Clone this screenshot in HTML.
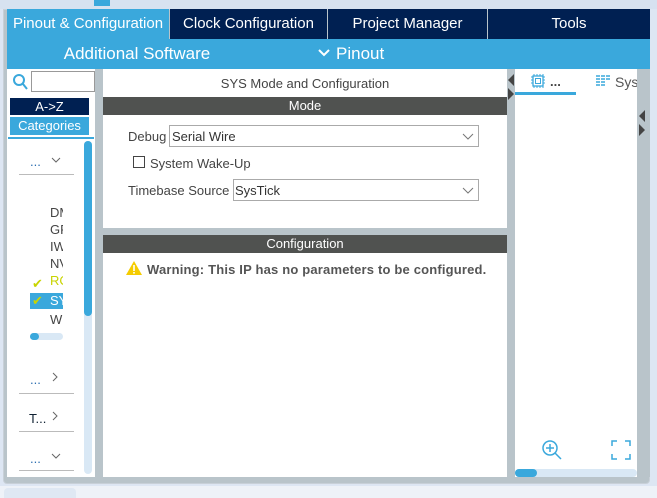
<!DOCTYPE html><html><head><style>
body{margin:0;width:657px;height:498px;overflow:hidden;background:#dde6f3;font-family:"Liberation Sans",sans-serif;position:relative}
div{position:absolute;box-sizing:border-box}
.t{color:#fff;font-size:15px;text-align:center;line-height:30px;top:9px;height:30px}
.g{color:#444;font-size:13px}
</style></head><body>
<div style="left:0;top:0;width:657px;height:9px;background:#d7e2f0"></div>
<div style="left:94px;top:0;width:16px;height:6px;background:#3aa8dc"></div>
<div style="left:3px;top:9px;width:647px;height:475px;background:#b9c4ca;border:1px solid #c8d0d8;border-radius:0 0 4px 4px"></div>
<div class="t" style="left:7px;width:162px;background:#3aa8dc">Pinout &amp; Configuration</div>
<div class="t" style="left:170px;width:157px;background:#002052">Clock Configuration</div>
<div class="t" style="left:328px;width:159px;background:#002052">Project Manager</div>
<div class="t" style="left:488px;width:162px;background:#002052">Tools</div>
<div style="left:7px;top:39px;width:643px;height:30px;background:#3aa8dc"></div>
<div class="t" style="left:7px;top:39px;width:260px;font-size:17px;color:#fff">Additional Software</div>
<svg style="position:absolute;left:318px;top:48px" width="12" height="10"><path d="M1 2L6 7L11 2" fill="none" stroke="#fff" stroke-width="2"/></svg>
<div class="t" style="left:336px;top:39px;width:50px;font-size:17px;color:#fff;text-align:left">Pinout</div>
<!-- left panel -->
<div style="left:7px;top:69px;width:88px;height:408px;background:#fff"></div>
<div style="left:95px;top:69px;width:8px;height:408px;background:#b9c4ca"></div>
<svg style="position:absolute;left:12px;top:73px" width="16" height="18"><circle cx="7" cy="7" r="5" fill="none" stroke="#3aa8dc" stroke-width="2"/><line x1="11" y1="11" x2="15" y2="16" stroke="#3aa8dc" stroke-width="2"/></svg>
<div style="left:31px;top:71px;width:64px;height:21px;border:1px solid #999;background:#fff"></div>
<div style="left:10px;top:98px;width:79px;height:17px;background:#002052;color:#fff;font-size:13px;text-align:center;line-height:17px">A-&gt;Z</div>
<div style="left:10px;top:117px;width:79px;height:18px;background:#3aa8dc;color:#fff;font-size:13px;text-align:center;line-height:18px">Categories</div>
<div style="left:8px;top:137px;width:86px;height:2px;background:#3aa8dc"></div>
<div style="left:84px;top:141px;width:8px;height:333px;background:#d9e8f5;border-radius:4px"></div>
<div style="left:84px;top:141px;width:8px;height:175px;background:#3aa8dc;border-radius:4px"></div>
<div class="g" style="left:30px;top:154px;color:#2a6db0">...</div>
<svg style="position:absolute;left:51px;top:157px" width="10" height="6"><path d="M1 1L5 5L9 1" fill="none" stroke="#666"/></svg>
<div style="left:19px;top:174px;width:55px;height:1px;background:#bbb"></div>
<div class="g" style="left:50px;top:204px;line-height:17px;width:13px;overflow:hidden;white-space:nowrap">DM<br>GP<br>IW<br>NV<br><span style="color:#c8d400">RC</span></div>
<div style="left:30px;top:293px;width:33px;height:16px;background:#3aa8dc"></div>
<div style="left:50px;top:293px;width:13px;height:16px;color:#fff;font-size:13px;line-height:16px;overflow:hidden;white-space:nowrap">SY</div>
<div class="g" style="left:32px;top:276px;color:#c8d400">&#10004;</div>
<div class="g" style="left:32px;top:293px;color:#c8d400">&#10004;</div>
<div class="g" style="left:50px;top:312px">W</div>
<div style="left:30px;top:333px;width:33px;height:7px;background:#d9e8f5;border-radius:4px"></div>
<div style="left:30px;top:333px;width:9px;height:7px;background:#3aa8dc;border-radius:4px"></div>
<div class="g" style="left:30px;top:372px;color:#2a6db0">...</div>
<svg style="position:absolute;left:52px;top:372px" width="6" height="10"><path d="M1 1L5 5L1 9" fill="none" stroke="#666"/></svg>
<div style="left:19px;top:393px;width:55px;height:1px;background:#bbb"></div>
<div class="g" style="left:29px;top:411px;color:#123">T...</div>
<svg style="position:absolute;left:52px;top:411px" width="6" height="10"><path d="M1 1L5 5L1 9" fill="none" stroke="#666"/></svg>
<div style="left:19px;top:431px;width:55px;height:1px;background:#bbb"></div>
<div class="g" style="left:30px;top:451px;color:#2a6db0">...</div>
<svg style="position:absolute;left:51px;top:453px" width="10" height="6"><path d="M1 1L5 5L9 1" fill="none" stroke="#666"/></svg>
<div style="left:19px;top:470px;width:55px;height:1px;background:#bbb"></div>
<!-- middle -->
<div style="left:103px;top:69px;width:404px;height:159px;background:#fff"></div>
<div class="g" style="left:103px;top:76px;width:404px;text-align:center">SYS Mode and Configuration</div>
<div style="left:103px;top:97px;width:404px;height:18px;background:#505250;color:#fff;font-size:13px;text-align:center;line-height:18px">Mode</div>
<div class="g" style="left:128px;top:129px">Debug</div>
<div style="left:169px;top:125px;width:310px;height:22px;border:1px solid #aaa;font-size:13px;color:#333;padding:3px 3px"></div>
<div style="left:172px;top:129px;font-size:13px;color:#333">Serial Wire</div>
<svg style="position:absolute;left:462px;top:133px" width="12" height="7"><path d="M1 1L6 6L11 1" fill="none" stroke="#777"/></svg>
<div style="left:133px;top:156px;width:12px;height:12px;border:1px solid #444"></div>
<div class="g" style="left:150px;top:156px">System Wake-Up</div>
<div class="g" style="left:128px;top:183px">Timebase Source</div>
<div style="left:233px;top:179px;width:246px;height:22px;border:1px solid #aaa"></div>
<div style="left:235px;top:183px;font-size:13px;color:#333">SysTick</div>
<svg style="position:absolute;left:462px;top:187px" width="12" height="7"><path d="M1 1L6 6L11 1" fill="none" stroke="#777"/></svg>
<div style="left:103px;top:235px;width:404px;height:242px;background:#fff"></div>
<div style="left:103px;top:235px;width:404px;height:18px;background:#505250;color:#fff;font-size:13px;text-align:center;line-height:18px">Configuration</div>
<svg style="position:absolute;left:125px;top:260px" width="18" height="16"><path d="M9 1L17 15H1Z" fill="#f5cc00"/><rect x="8.2" y="5" width="1.6" height="6" fill="#fff"/><rect x="8.2" y="12" width="1.6" height="1.6" fill="#fff"/></svg>
<div class="g" style="left:147px;top:262px;font-weight:bold;color:#555;letter-spacing:0.18px">Warning: This IP has no parameters to be configured.</div>
<!-- right -->
<div style="left:507px;top:69px;width:8px;height:408px;background:#b9c4ca"></div>
<svg style="position:absolute;left:507px;top:72px" width="8" height="30"><path d="M7 2L1 8L7 14Z M1 16L7 22L1 28Z" fill="#444"/></svg>
<div style="left:515px;top:69px;width:122px;height:408px;background:#fff"></div>
<div style="left:637px;top:69px;width:13px;height:408px;background:#b9c4ca"></div>
<svg style="position:absolute;left:638px;top:108px" width="8" height="30"><path d="M7 2L1 8L7 14Z M1 16L7 22L1 28Z" fill="#444"/></svg>
<svg style="position:absolute;left:530px;top:73px" width="16" height="16"><path d="M4 1V3M7 1V3M10 1V3M13 1V3M4 13V15M7 13V15M10 13V15M13 13V15M1 4H3M1 7H3M1 10H3M13 4H15M13 7H15M13 10H15" stroke="#3aa8dc"/><rect x="3" y="3" width="10" height="10" fill="none" stroke="#3aa8dc" stroke-width="1.3"/><rect x="5.5" y="5.5" width="5" height="5" fill="none" stroke="#3aa8dc"/></svg>
<div class="g" style="left:550px;top:74px;font-weight:bold;color:#444">...</div>
<div style="left:515px;top:92px;width:61px;height:3px;background:#3aa8dc"></div>
<svg style="position:absolute;left:596px;top:75px" width="14" height="12"><path d="M0 1H4M5 1H9M10 1H14M0 4H4M5 4H9M10 4H14M0 7H4M5 7H9M0 10H4M5 10H9" stroke="#3aa8dc" stroke-width="1.5"/></svg>
<div style="left:615px;top:74px;width:22px;overflow:hidden;white-space:nowrap;font-size:14px;color:#555">System</div>
<svg style="position:absolute;left:541px;top:439px" width="22" height="22"><circle cx="9" cy="9" r="7" fill="none" stroke="#3aa8dc" stroke-width="1.5"/><path d="M9 5V13M5 9H13M14 14L20 20" stroke="#3aa8dc" stroke-width="1.5"/></svg>
<svg style="position:absolute;left:611px;top:440px" width="20" height="20"><path d="M1 6V1H6M14 1H19V6M19 14V19H14M6 19H1V14" fill="none" stroke="#3aa8dc" stroke-width="1.5"/></svg>
<div style="left:515px;top:469px;width:122px;height:8px;background:#d9e8f5;border-radius:4px"></div>
<div style="left:515px;top:469px;width:22px;height:8px;background:#3aa8dc;border-radius:4px"></div>
<!-- bottom -->
<div style="left:0;top:486px;width:657px;height:12px;background:#eef2f8"></div>
<div style="left:4px;top:488px;width:72px;height:10px;background:#dfe8f3;border-radius:4px 4px 0 0"></div>
</body></html>
